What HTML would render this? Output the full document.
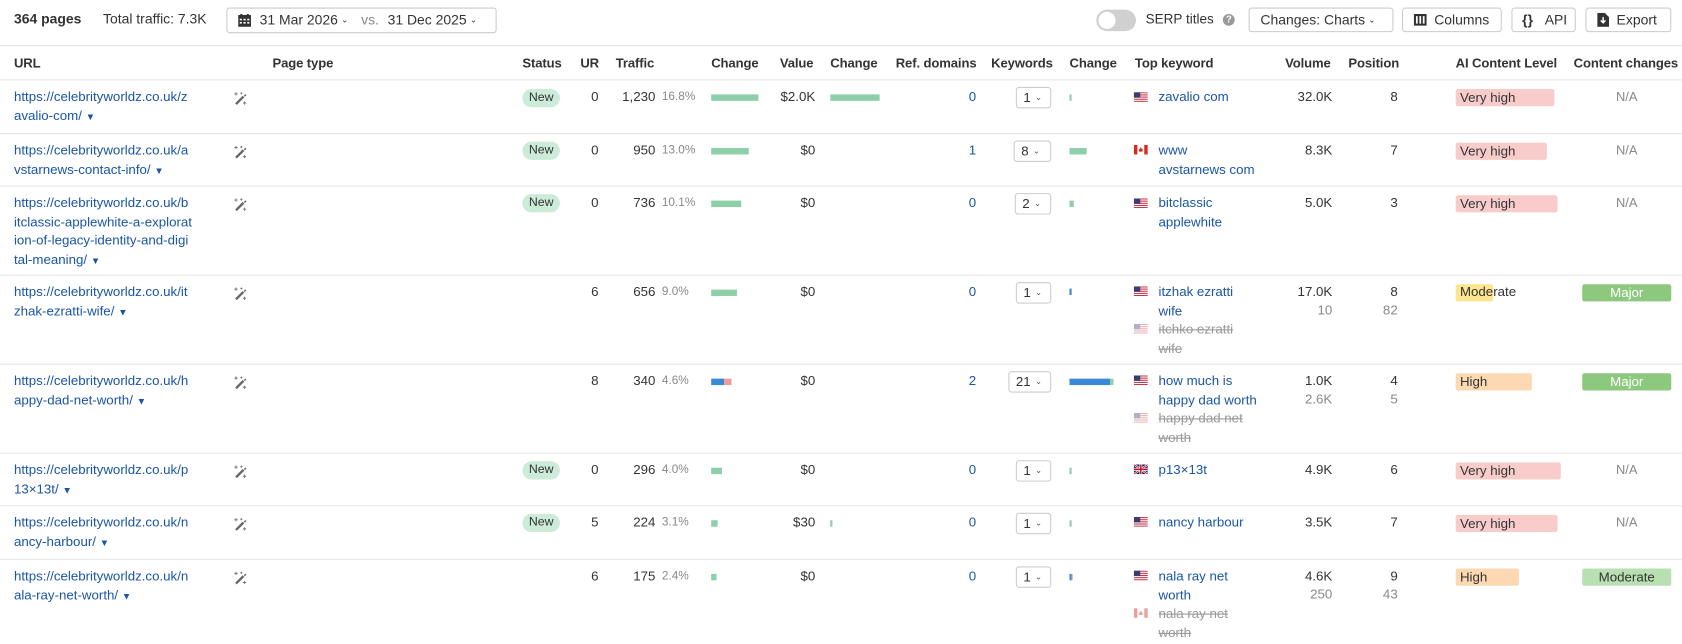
<!DOCTYPE html>
<html><head><meta charset="utf-8">
<style>
html,body{margin:0;padding:0;background:#fff;width:1682px;height:644px;overflow:hidden}
#w{position:absolute;left:0;top:0;width:1568px;height:600px;transform:scale(1.07270);transform-origin:0 0;font-family:"Liberation Sans",sans-serif;font-size:12.4px;color:#333}
#w div,#w span.a{position:absolute}
.t{white-space:nowrap;line-height:17.5px}
.l{color:#1a55a6}
.r{text-align:right}
.h{font-weight:bold;color:#333;top:51px;font-size:12.2px;letter-spacing:-0.1px}
.hr{left:0;width:1568px;height:1px;background:#e6e6e6}
.g{color:#888;font-size:11px}
.bar{height:5.5px}
.gr{background:#8ccfa8}.bl{background:#3a88d8}.rd{background:#f19c9c}
.new{background:#cdebd9;border-radius:10px;height:17px;line-height:17px;padding:0 6px;font-size:11.5px;color:#333}
.sel{border:1px solid #ccc;border-radius:3px;height:20px;line-height:19px;box-sizing:border-box;padding-left:6px;font-size:12.4px}
.sel i{font-style:normal;font-size:8px;color:#555;margin-left:4px;position:relative;top:-2px}
.ai{height:16px;line-height:16px;border-radius:2px;padding-left:4px;box-sizing:border-box}
.vh{background:#f9cccc}.hi{background:#fdd9b3}
.cc{height:16px;line-height:16px;border-radius:2px;text-align:center;width:83px;left:1475px}
.btn{border:1px solid #ccc;border-radius:3px;height:23px;box-sizing:border-box;line-height:21px;top:7px;color:#333;font-size:13px}
.st{color:#999;text-decoration:line-through}
.f{width:13px;height:9px}
.wand{width:14px;height:14px}
.cv{font-size:8px;position:relative;top:-2px;margin-left:3px}
</style></head><body><div id="w">

<div class="t" style="left:13px;top:9px;font-weight:bold;font-size:13px">364 pages</div>
<div class="t" style="left:96px;top:9px;font-size:13px">Total traffic: 7.3K</div>
<div class="btn" style="left:211px;width:252px;top:7px;height:24px">
 <svg style="position:absolute;left:10px;top:5px" width="12" height="12" viewBox="0 0 12 12"><rect x="0" y="1" width="12" height="11" fill="#333"/><rect x="2" y="0" width="2" height="2" fill="#333"/><rect x="8" y="0" width="2" height="2" fill="#333"/><g fill="#fff"><rect x="1.5" y="4.5" width="2" height="1.5"/><rect x="5" y="4.5" width="2" height="1.5"/><rect x="8.5" y="4.5" width="2" height="1.5"/><rect x="1.5" y="7.5" width="2" height="1.5"/><rect x="5" y="7.5" width="2" height="1.5"/><rect x="8.5" y="7.5" width="2" height="1.5"/></g></svg>
 <span class="a t" style="left:30px;top:2px">31 Mar 2026<span class="cv">&#8964;</span><span style="color:#888;margin:0 8px 0 12px">vs.</span>31 Dec 2025<span class="cv">&#8964;</span></span>
</div>

<div style="left:1022px;top:9px;width:37px;height:20px;border-radius:10px;background:#d0d0d0"></div>
<div style="left:1024px;top:11px;width:16px;height:16px;border-radius:8px;background:#fff"></div>
<div class="t" style="left:1068px;top:10px;font-size:12.6px">SERP titles</div>
<div style="left:1140px;top:13px;width:11px;height:11px;border-radius:6px;background:#999;color:#fff;font-size:9px;line-height:11px;text-align:center;font-weight:bold">?</div>
<div class="btn" style="left:1164px;width:135px"><span class="a t" style="left:10px;top:2px">Changes: Charts<span class="cv">&#8964;</span></span></div>
<div class="btn" style="left:1307px;width:93px">
 <svg style="position:absolute;left:10px;top:5px" width="12" height="11" viewBox="0 0 12 11"><rect width="12" height="11" fill="#333"/><rect x="2" y="2" width="1.6" height="7" fill="#fff"/><rect x="5.2" y="2" width="1.6" height="7" fill="#fff"/><rect x="8.4" y="2" width="1.6" height="7" fill="#fff"/></svg>
 <span class="a t" style="left:29px;top:2px">Columns</span></div>
<div class="btn" style="left:1409px;width:60px"><span class="a t" style="left:9px;top:2px;font-weight:bold">{}</span><span class="a t" style="left:30px;top:2px">API</span></div>
<div class="btn" style="left:1478px;width:80px">
 <svg style="position:absolute;left:10px;top:4px" width="11" height="13" viewBox="0 0 11 13"><path d="M0 0H7L11 4V13H0Z" fill="#333"/><path d="M5.5 4V9M3.3 7L5.5 9.3 7.7 7" stroke="#fff" stroke-width="1.4" fill="none"/></svg>
 <span class="a t" style="left:28px;top:2px">Export</span></div>

<div class="hr" style="top:42px"></div>
<div class="t h" style="left:13px">URL</div>
<div class="t h" style="left:254px">Page type</div>
<div class="t h" style="left:487px">Status</div>
<div class="t h" style="left:541px">UR</div>
<div class="t h" style="left:574px">Traffic</div>
<div class="t h" style="left:663px">Change</div>
<div class="t h" style="left:727px">Value</div>
<div class="t h" style="left:774px">Change</div>
<div class="t h" style="left:835px">Ref. domains</div>
<div class="t h" style="left:924px">Keywords</div>
<div class="t h" style="left:997px">Change</div>
<div class="t h" style="left:1058px">Top keyword</div>
<div class="t h" style="left:1198px">Volume</div>
<div class="t h" style="left:1257px">Position</div>
<div class="t h" style="left:1357px">AI Content Level</div>
<div class="t h" style="left:1467px">Content changes</div>
<div class="hr" style="top:74px"></div>

<svg width="0" height="0" style="position:absolute"><defs>
<symbol id="wd" viewBox="0 0 14 14"><path d="M3 12L10 5" stroke="#666" stroke-width="2.2"/><path d="M11 3.5L12 4.5" stroke="#666" stroke-width="2"/><path d="M3 1v3M1.5 2.5h3M11 9.5v3M9.5 11h3M8 1v2M7 2h2" stroke="#777" stroke-width="0.9"/></symbol>
<symbol id="us" viewBox="0 0 13 9"><rect width="13" height="9" fill="#fff"/><g fill="#c8334a"><rect y="0" width="13" height="1"/><rect y="2" width="13" height="1"/><rect y="4" width="13" height="1"/><rect y="6" width="13" height="1"/><rect y="8" width="13" height="1"/></g><rect width="6" height="5" fill="#3c3b6e"/></symbol>
<symbol id="ca" viewBox="0 0 13 9"><rect width="13" height="9" fill="#fff"/><rect width="3.3" height="9" fill="#d52b1e"/><rect x="9.7" width="3.3" height="9" fill="#d52b1e"/><path d="M6.5 2L7.6 4.3 8.5 4 8 6.3H5L4.5 4 5.4 4.3Z" fill="#d52b1e"/></symbol>
<symbol id="uk" viewBox="0 0 13 9"><rect width="13" height="9" fill="#012169"/><path d="M0 0L13 9M13 0L0 9" stroke="#fff" stroke-width="2"/><path d="M0 0L13 9M13 0L0 9" stroke="#c8102e" stroke-width="0.8"/><path d="M6.5 0V9M0 4.5H13" stroke="#fff" stroke-width="2.6"/><path d="M6.5 0V9M0 4.5H13" stroke="#c8102e" stroke-width="1.4"/></symbol>
</defs></svg>

<!-- ROW 1 -->
<div class="t l" style="left:13px;top:82px">https://celebrityworldz.co.uk/z<br>avalio-com/ <span style="font-size:9px">&#9660;</span></div>
<svg class="wand" style="position:absolute;left:217px;top:85px"><use href="#wd"/></svg>
<div class="new" style="left:487px;top:83px">New</div>
<div class="t r" style="left:500px;width:58px;top:82px">0</div>
<div class="t r" style="left:550px;width:61px;top:82px">1,230</div>
<div class="t g" style="left:617px;top:82px">16.8%</div>
<div class="bar gr" style="left:663px;top:88px;width:44px"></div>
<div class="t r" style="left:700px;width:60px;top:82px">$2.0K</div>
<div class="bar gr" style="left:774px;top:88px;width:46px"></div>
<div class="t r l" style="left:850px;width:60px;top:82px">0</div>
<div class="sel" style="left:947px;top:81px;width:33px">1<i>&#8964;</i></div>
<div class="bar gr" style="left:997px;top:88px;width:2px"></div>
<svg class="f" style="position:absolute;left:1057px;top:86px"><use href="#us"/></svg>
<div class="t l" style="left:1080px;top:82px">zavalio com</div>
<div class="t r" style="left:1180px;width:62px;top:82px">32.0K</div>
<div class="t r" style="left:1250px;width:53px;top:82px">8</div>
<div class="ai vh t" style="left:1357px;top:83px;width:92px">Very high</div>
<div class="t g" style="left:1475px;width:83px;text-align:center;top:82px;font-size:12px">N/A</div>
<div class="hr" style="top:124px"></div>

<!-- ROW 2 -->
<div class="t l" style="left:13px;top:132px">https://celebrityworldz.co.uk/a<br>vstarnews-contact-info/ <span style="font-size:9px">&#9660;</span></div>
<svg class="wand" style="position:absolute;left:217px;top:135px"><use href="#wd"/></svg>
<div class="new" style="left:487px;top:132px">New</div>
<div class="t r" style="left:500px;width:58px;top:132px">0</div>
<div class="t r" style="left:550px;width:61px;top:132px">950</div>
<div class="t g" style="left:617px;top:132px">13.0%</div>
<div class="bar gr" style="left:663px;top:138px;width:35px"></div>
<div class="t r" style="left:700px;width:60px;top:132px">$0</div>
<div class="t r l" style="left:850px;width:60px;top:132px">1</div>
<div class="sel" style="left:945px;top:131px;width:35px">8<i>&#8964;</i></div>
<div class="bar gr" style="left:997px;top:138px;width:16px"></div>
<svg class="f" style="position:absolute;left:1057px;top:135px"><use href="#ca"/></svg>
<div class="t l" style="left:1080px;top:132px">www<br>avstarnews com</div>
<div class="t r" style="left:1180px;width:62px;top:132px">8.3K</div>
<div class="t r" style="left:1250px;width:53px;top:132px">7</div>
<div class="ai vh t" style="left:1357px;top:133px;width:85px">Very high</div>
<div class="t g" style="left:1475px;width:83px;text-align:center;top:132px;font-size:12px">N/A</div>
<div class="hr" style="top:173px"></div>

<!-- ROW 3 -->
<div class="t l" style="left:13px;top:181px">https://celebrityworldz.co.uk/b<br>itclassic-applewhite-a-explorat<br>ion-of-legacy-identity-and-digi<br>tal-meaning/ <span style="font-size:9px">&#9660;</span></div>
<svg class="wand" style="position:absolute;left:217px;top:184px"><use href="#wd"/></svg>
<div class="new" style="left:487px;top:181px">New</div>
<div class="t r" style="left:500px;width:58px;top:181px">0</div>
<div class="t r" style="left:550px;width:61px;top:181px">736</div>
<div class="t g" style="left:617px;top:181px">10.1%</div>
<div class="bar gr" style="left:663px;top:187px;width:28px"></div>
<div class="t r" style="left:700px;width:60px;top:181px">$0</div>
<div class="t r l" style="left:850px;width:60px;top:181px">0</div>
<div class="sel" style="left:946px;top:180px;width:34px">2<i>&#8964;</i></div>
<div class="bar gr" style="left:997px;top:187px;width:4px"></div>
<svg class="f" style="position:absolute;left:1057px;top:185px"><use href="#us"/></svg>
<div class="t l" style="left:1080px;top:181px">bitclassic<br>applewhite</div>
<div class="t r" style="left:1180px;width:62px;top:181px">5.0K</div>
<div class="t r" style="left:1250px;width:53px;top:181px">3</div>
<div class="ai vh t" style="left:1357px;top:182px;width:95px">Very high</div>
<div class="t g" style="left:1475px;width:83px;text-align:center;top:181px;font-size:12px">N/A</div>
<div class="hr" style="top:256px"></div>

<!-- ROW 4 -->
<div class="t l" style="left:13px;top:264px">https://celebrityworldz.co.uk/it<br>zhak-ezratti-wife/ <span style="font-size:9px">&#9660;</span></div>
<svg class="wand" style="position:absolute;left:217px;top:267px"><use href="#wd"/></svg>
<div class="t r" style="left:500px;width:58px;top:264px">6</div>
<div class="t r" style="left:550px;width:61px;top:264px">656</div>
<div class="t g" style="left:617px;top:264px">9.0%</div>
<div class="bar gr" style="left:663px;top:270px;width:24px"></div>
<div class="t r" style="left:700px;width:60px;top:264px">$0</div>
<div class="t r l" style="left:850px;width:60px;top:264px">0</div>
<div class="sel" style="left:947px;top:263px;width:33px">1<i>&#8964;</i></div>
<div class="bar bl" style="left:997px;top:269px;width:2px;height:6px"></div>
<svg class="f" style="position:absolute;left:1057px;top:267px"><use href="#us"/></svg>
<div class="t l" style="left:1080px;top:264px">itzhak ezratti<br>wife</div>
<svg class="f" style="position:absolute;left:1057px;top:302px;opacity:.4"><use href="#us"/></svg>
<div class="t st" style="left:1080px;top:299px">itchko ezratti<br>wife</div>
<div class="t r" style="left:1180px;width:62px;top:264px">17.0K</div>
<div class="t r" style="left:1180px;width:62px;top:281px;color:#888">10</div>
<div class="t r" style="left:1250px;width:53px;top:264px">8</div>
<div class="t r" style="left:1250px;width:53px;top:281px;color:#888">82</div>
<div style="left:1357px;top:265px;width:35px;height:16px;background:#fde48f;border-radius:2px"></div>
<div class="t" style="left:1361px;top:264px">Moderate</div>
<div class="cc t" style="top:265px;background:#8cc97e;color:#fff">Major</div>
<div class="hr" style="top:339px"></div>

<!-- ROW 5 -->
<div class="t l" style="left:13px;top:347px">https://celebrityworldz.co.uk/h<br>appy-dad-net-worth/ <span style="font-size:9px">&#9660;</span></div>
<svg class="wand" style="position:absolute;left:217px;top:350px"><use href="#wd"/></svg>
<div class="t r" style="left:500px;width:58px;top:347px">8</div>
<div class="t r" style="left:550px;width:61px;top:347px">340</div>
<div class="t g" style="left:617px;top:347px">4.6%</div>
<div class="bar bl" style="left:663px;top:353px;width:12px"></div>
<div class="bar rd" style="left:675px;top:353px;width:7px"></div>
<div class="t r" style="left:700px;width:60px;top:347px">$0</div>
<div class="t r l" style="left:850px;width:60px;top:347px">2</div>
<div class="sel" style="left:940px;top:346px;width:40px">21<i>&#8964;</i></div>
<div class="bar bl" style="left:997px;top:353px;width:38px"></div>
<div class="bar gr" style="left:1035px;top:353px;width:3px"></div>
<svg class="f" style="position:absolute;left:1057px;top:350px"><use href="#us"/></svg>
<div class="t l" style="left:1080px;top:347px">how much is<br>happy dad worth</div>
<svg class="f" style="position:absolute;left:1057px;top:385px;opacity:.4"><use href="#us"/></svg>
<div class="t st" style="left:1080px;top:382px">happy dad net<br>worth</div>
<div class="t r" style="left:1180px;width:62px;top:347px">1.0K</div>
<div class="t r" style="left:1180px;width:62px;top:364px;color:#888">2.6K</div>
<div class="t r" style="left:1250px;width:53px;top:347px">4</div>
<div class="t r" style="left:1250px;width:53px;top:364px;color:#888">5</div>
<div class="ai hi t" style="left:1357px;top:348px;width:71px">High</div>
<div class="cc t" style="top:348px;background:#8cc97e;color:#fff">Major</div>
<div class="hr" style="top:422px"></div>

<!-- ROW 6 -->
<div class="t l" style="left:13px;top:430px">https://celebrityworldz.co.uk/p<br>13×13t/ <span style="font-size:9px">&#9660;</span></div>
<svg class="wand" style="position:absolute;left:217px;top:433px"><use href="#wd"/></svg>
<div class="new" style="left:487px;top:430px">New</div>
<div class="t r" style="left:500px;width:58px;top:430px">0</div>
<div class="t r" style="left:550px;width:61px;top:430px">296</div>
<div class="t g" style="left:617px;top:430px">4.0%</div>
<div class="bar gr" style="left:663px;top:436px;width:10px"></div>
<div class="t r" style="left:700px;width:60px;top:430px">$0</div>
<div class="t r l" style="left:850px;width:60px;top:430px">0</div>
<div class="sel" style="left:947px;top:429px;width:33px">1<i>&#8964;</i></div>
<div class="bar gr" style="left:997px;top:436px;width:2px"></div>
<svg class="f" style="position:absolute;left:1057px;top:433px"><use href="#uk"/></svg>
<div class="t l" style="left:1080px;top:430px">p13×13t</div>
<div class="t r" style="left:1180px;width:62px;top:430px">4.9K</div>
<div class="t r" style="left:1250px;width:53px;top:430px">6</div>
<div class="ai vh t" style="left:1357px;top:431px;width:98px">Very high</div>
<div class="t g" style="left:1475px;width:83px;text-align:center;top:430px;font-size:12px">N/A</div>
<div class="hr" style="top:471px"></div>

<!-- ROW 7 -->
<div class="t l" style="left:13px;top:479px">https://celebrityworldz.co.uk/n<br>ancy-harbour/ <span style="font-size:9px">&#9660;</span></div>
<svg class="wand" style="position:absolute;left:217px;top:482px"><use href="#wd"/></svg>
<div class="new" style="left:487px;top:479px">New</div>
<div class="t r" style="left:500px;width:58px;top:479px">5</div>
<div class="t r" style="left:550px;width:61px;top:479px">224</div>
<div class="t g" style="left:617px;top:479px">3.1%</div>
<div class="bar gr" style="left:663px;top:485px;width:6px"></div>
<div class="t r" style="left:700px;width:60px;top:479px">$30</div>
<div class="bar gr" style="left:774px;top:485px;width:1.5px"></div>
<div class="t r l" style="left:850px;width:60px;top:479px">0</div>
<div class="sel" style="left:947px;top:478px;width:33px">1<i>&#8964;</i></div>
<div class="bar gr" style="left:997px;top:485px;width:2px"></div>
<svg class="f" style="position:absolute;left:1057px;top:482px"><use href="#us"/></svg>
<div class="t l" style="left:1080px;top:479px">nancy harbour</div>
<div class="t r" style="left:1180px;width:62px;top:479px">3.5K</div>
<div class="t r" style="left:1250px;width:53px;top:479px">7</div>
<div class="ai vh t" style="left:1357px;top:480px;width:95px">Very high</div>
<div class="t g" style="left:1475px;width:83px;text-align:center;top:479px;font-size:12px">N/A</div>
<div class="hr" style="top:521px"></div>

<!-- ROW 8 -->
<div class="t l" style="left:13px;top:529px">https://celebrityworldz.co.uk/n<br>ala-ray-net-worth/ <span style="font-size:9px">&#9660;</span></div>
<svg class="wand" style="position:absolute;left:217px;top:532px"><use href="#wd"/></svg>
<div class="t r" style="left:500px;width:58px;top:529px">6</div>
<div class="t r" style="left:550px;width:61px;top:529px">175</div>
<div class="t g" style="left:617px;top:529px">2.4%</div>
<div class="bar gr" style="left:663px;top:535px;width:5px"></div>
<div class="t r" style="left:700px;width:60px;top:529px">$0</div>
<div class="t r l" style="left:850px;width:60px;top:529px">0</div>
<div class="sel" style="left:947px;top:528px;width:33px">1<i>&#8964;</i></div>
<div class="bar bl" style="left:997px;top:535px;width:1.5px"></div>
<div class="bar rd" style="left:998.5px;top:535px;width:1.5px"></div>
<svg class="f" style="position:absolute;left:1057px;top:532px"><use href="#us"/></svg>
<div class="t l" style="left:1080px;top:529px">nala ray net<br>worth</div>
<svg class="f" style="position:absolute;left:1057px;top:567px;opacity:.45"><use href="#ca"/></svg>
<div class="t st" style="left:1080px;top:564px">nala ray net<br>worth</div>
<div class="t r" style="left:1180px;width:62px;top:529px">4.6K</div>
<div class="t r" style="left:1180px;width:62px;top:546px;color:#888">250</div>
<div class="t r" style="left:1250px;width:53px;top:529px">9</div>
<div class="t r" style="left:1250px;width:53px;top:546px;color:#888">43</div>
<div class="ai hi t" style="left:1357px;top:530px;width:59px">High</div>
<div class="cc t" style="top:530px;background:#b9e0b2;color:#333">Moderate</div>

</div></body></html>
